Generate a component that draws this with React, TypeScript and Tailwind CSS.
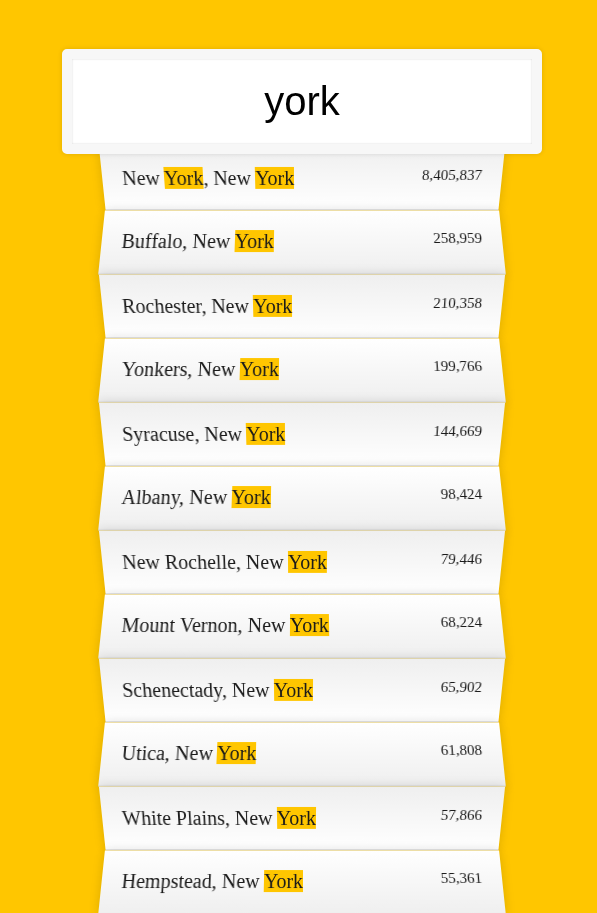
import React from "react";

const cities: [string, string][] = [
  ["New York, New York", "8,405,837"],
  ["Buffalo, New York", "258,959"],
  ["Rochester, New York", "210,358"],
  ["Yonkers, New York", "199,766"],
  ["Syracuse, New York", "144,669"],
  ["Albany, New York", "98,424"],
  ["New Rochelle, New York", "79,446"],
  ["Mount Vernon, New York", "68,224"],
  ["Schenectady, New York", "65,902"],
  ["Utica, New York", "61,808"],
  ["White Plains, New York", "57,866"],
  ["Hempstead, New York", "55,361"],
];

function Highlight({ text }: { text: string }) {
  const parts = text.split(/(York)/);
  return (
    <span>
      {parts.map((p, i) =>
        p === "York" ? (
          <span key={i} className="bg-[#ffc600]">
            {p}
          </span>
        ) : (
          <React.Fragment key={i}>{p}</React.Fragment>
        )
      )}
    </span>
  );
}

export default function App() {
  return (
    <div className="min-h-screen bg-[#ffc600] pl-[7px] text-[20px] text-[#1a1a1a] [font-family:'Liberation_Serif',serif]">
      <form className="mx-auto w-[400px] pt-[49px]" onSubmit={(e) => e.preventDefault()}>
        <input
          autoFocus
          defaultValue="york"
          className="relative z-[2] -ml-[40px] -mb-[10px] block h-[105px] w-[480px] rounded-[5px] border-[10px] border-[#F7F7F7] bg-white p-[20px] text-center text-[40px] leading-[normal] text-black caret-black outline-none shadow-[0_0_5px_rgba(0,0,0,0.12),inset_0_0_2px_rgba(0,0,0,0.19)] [font-family:'Liberation_Sans',Arial,sans-serif]"
        />
        <ul className="relative m-0 p-0">
          {cities.map(([name, pop], i) => (
            <li
              key={name}
              className={
                "flex justify-between border-b border-[#D8D8D8] p-[20px] leading-[normal] shadow-[0_0_10px_rgba(0,0,0,0.14)] " +
                (i % 2 === 0
                  ? "[transform:perspective(100px)_rotateX(-3deg)_translateY(3px)] bg-[linear-gradient(to_top,#ffffff_0%,#EFEFEF_100%)]"
                  : "[transform:perspective(100px)_rotateX(3deg)_translateY(2px)_scale(1.001)] bg-[linear-gradient(to_bottom,#ffffff_0%,#EFEFEF_100%)]")
              }
            >
              <span className="text-[20px]">
                <Highlight text={name} />
              </span>
              <span className="text-[15px]">{pop}</span>
            </li>
          ))}
        </ul>
      </form>
    </div>
  );
}
